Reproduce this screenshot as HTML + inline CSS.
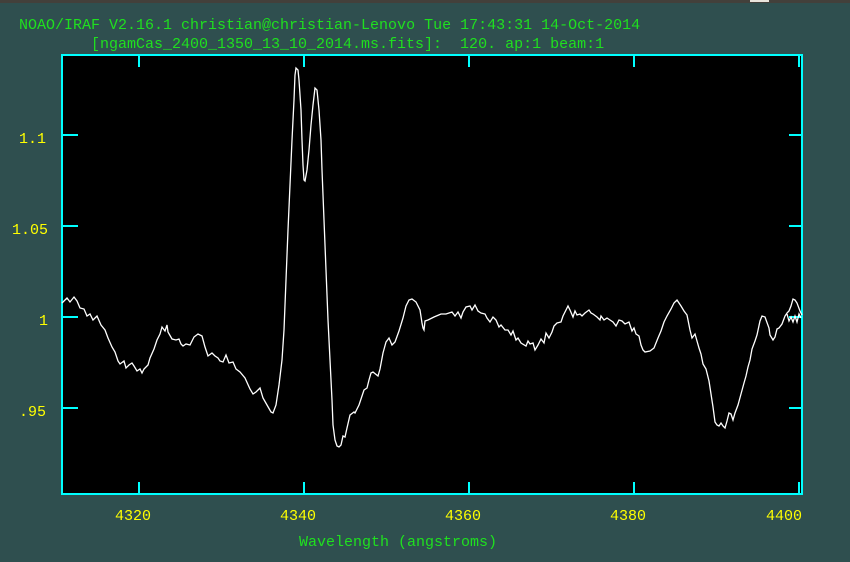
<!DOCTYPE html>
<html><head><meta charset="utf-8"><style>
html,body{margin:0;padding:0;width:850px;height:562px;overflow:hidden;background:#2f4f4f}
svg{display:block}
text{font-family:"Liberation Mono",monospace;font-size:15px}
</style></head><body>
<svg width="850" height="562" xmlns="http://www.w3.org/2000/svg">
<rect x="0" y="0" width="850" height="562" fill="#2f4f4f"/>
<rect x="0" y="0" width="850" height="3" fill="#43403b"/>
<rect x="750" y="0" width="19" height="2" fill="#e8e4dc"/>
<text x="19" y="29" fill="#1fe01f">NOAO/IRAF V2.16.1 christian@christian-Lenovo Tue 17:43:31 14-Oct-2014</text>
<text x="91" y="48" fill="#1fe01f" xml:space="preserve">[ngamCas_2400_1350_13_10_2014.ms.fits]:  120. ap:1 beam:1</text>
<rect x="62" y="55" width="740" height="439" fill="#000"/>
<g stroke="#00ffff" stroke-width="2" fill="none">
<rect x="62" y="55" width="740" height="439"/>
<path d="M139 55v12M304 55v12M469 55v12M634 55v12M799 55v12M139 494v-12M304 494v-12M469 494v-12M634 494v-12M799 494v-12M62 135h16M62 226h16M62 317h16M62 408h16M802 135h-13M802 226h-13M802 317h-13M802 408h-13"/>
</g>
<g fill="#ffff00">
<text x="46" y="143" text-anchor="end">1.1</text>
<text x="48" y="234" text-anchor="end">1.05</text>
<text x="48" y="325" text-anchor="end">1</text>
<text x="46" y="416" text-anchor="end">.95</text>
<text x="133" y="520" text-anchor="middle">4320</text>
<text x="298" y="520" text-anchor="middle">4340</text>
<text x="463" y="520" text-anchor="middle">4360</text>
<text x="628" y="520" text-anchor="middle">4380</text>
<text x="784" y="520" text-anchor="middle">4400</text>
</g>
<text x="398" y="546" fill="#1fe01f" text-anchor="middle">Wavelength (angstroms)</text>
<polyline fill="none" stroke="#fff" stroke-width="1.3" points="62,303 65,300 67,298 70,302 74,297 77,301 80,308 84,309 87,316 90,314 93,320 97,316 101,325 105,330 108,338 112,347 115,352 118,361 120,364 124,361 126,368 129,365 132,363 134,366 137,371 140,369 142,373 144,369 148,365 150,358 154,349 157,340 160,334 162,327 165,331 167,325 168,332 172,339 176,340 179,339 181,344 183,346 186,344 190,345 194,337 198,334 202,336 205,347 208,356 212,353 215,356 218,358 220,361 223,362 226,355 229,363 233,362 236,369 240,372 245,378 250,389 253,394 256,392 260,388 263,398 267,405 271,412 273,413 276,405 279,385 282,360 284,330 286,280 288,230 290,185 292,140 294,100 295,75 296,68 298,70 299,80 301,110 302,140 303,165 304,180 305,181 307,170 309,150 311,125 313,105 315,88 317,90 319,110 321,140 322,170 324,220 326,270 328,320 330,360 332,400 333,425 335,440 337,446 339,447 341,445 343,436 345,437 347,428 350,415 354,412 355,413 357,409 359,405 362,396 364,390 367,388 369,380 371,373 373,372 378,376 380,369 383,353 386,342 389,338 392,345 395,342 399,331 403,318 406,306 409,300 412,299 416,302 420,310 422,323 423,328 424,330 425,321 428,320 434,317 441,314 446,314 452,312 455,316 458,312 461,318 463,312 466,307 470,306 472,310 475,305 478,311 481,313 485,314 487,318 490,322 493,317 496,320 499,327 501,325 505,330 508,330 511,335 513,331 516,340 518,338 521,343 526,346 528,341 530,344 533,343 535,350 538,345 541,339 544,343 546,333 549,338 552,332 554,326 557,323 561,322 563,316 566,310 568,306 570,310 573,317 575,311 577,315 580,314 582,316 585,313 589,310 591,313 593,314 597,317 600,320 601,316 604,320 607,318 610,320 613,322 616,326 619,320 622,321 625,324 629,322 632,331 634,328 636,334 639,336 641,345 643,350 645,352 650,351 654,348 658,338 661,331 664,322 667,316 671,309 674,303 677,300 681,306 684,311 687,315 690,330 692,338 695,334 697,341 699,348 701,354 703,364 706,369 709,381 711,394 713,407 715,422 717,425 719,426 721,423 723,426 725,428 727,421 729,413 731,414 733,420 735,413 738,405 741,394 744,383 746,376 748,367 750,360 752,349 755,341 757,335 760,321 762,316 765,317 769,328 770,335 773,340 775,337 777,329 779,328 782,324 785,316 787,313 789,311 791,306 793,299 795,300 797,303 800,311 802,315"/>
<polyline fill="none" stroke="#fff" stroke-width="1.3" points="787,314 789,321 791,317 793,322 795,316 797,322 799,314 801,318"/>
</svg>
</body></html>
